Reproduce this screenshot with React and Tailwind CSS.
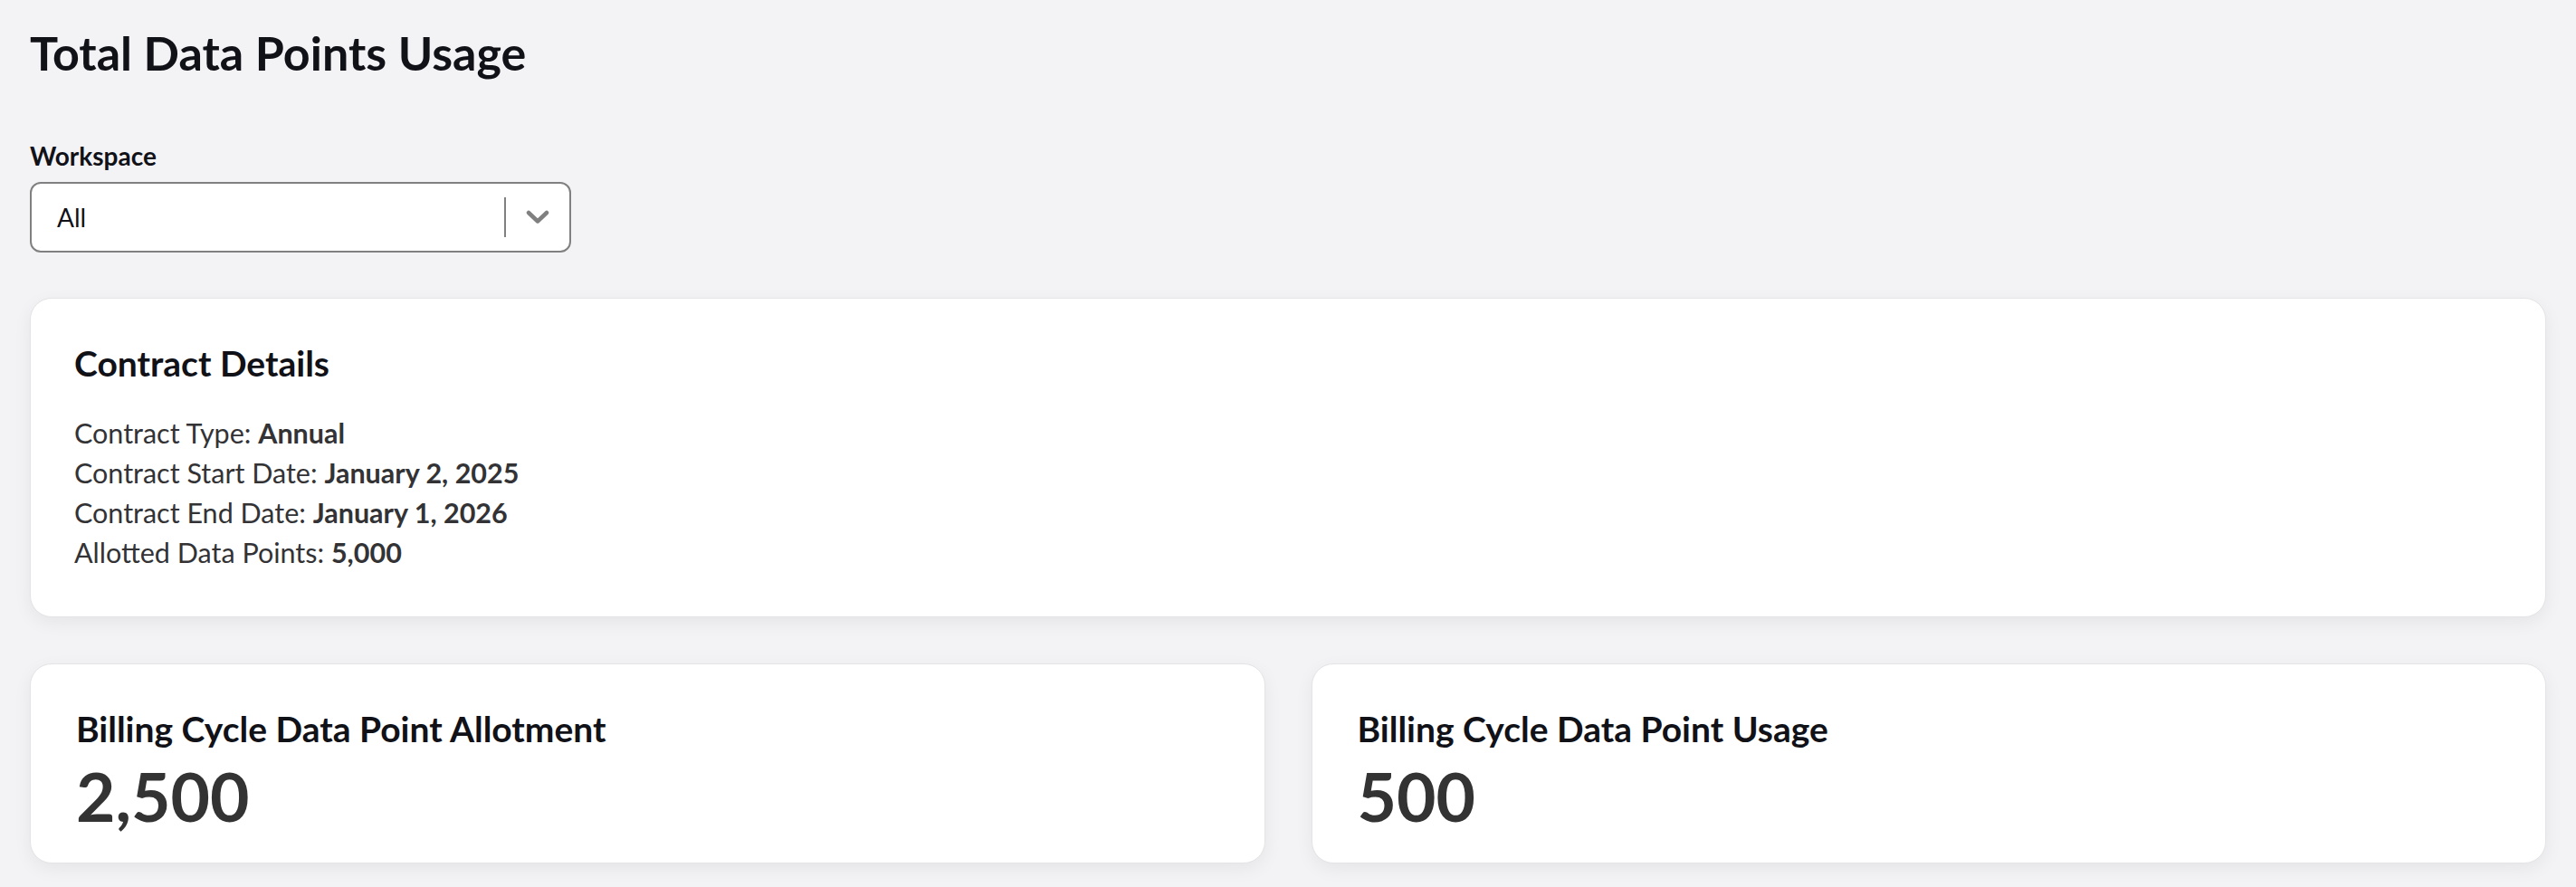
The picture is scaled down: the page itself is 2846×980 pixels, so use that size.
const details = [
  { label: "Contract Type", value: "Annual" },
  { label: "Contract Start Date", value: "January 2, 2025" },
  { label: "Contract End Date", value: "January 1, 2026" },
  { label: "Allotted Data Points", value: "5,000" },
];

const stats = [
  { title: "Billing Cycle Data Point Allotment", value: "2,500" },
  { title: "Billing Cycle Data Point Usage", value: "500" },
];

const Card = ({ className = "", children }) => (
  <div
    className={`bg-white border border-[#e4e4e7] rounded-[24px] shadow-[0_6px_20px_rgba(0,0,0,0.06)] ${className}`}
  >
    {children}
  </div>
);

const App = () => {
  return (
    <div className="min-h-screen bg-[#f3f3f5] px-[33px] pt-[27px] pb-10 font-['Lato',sans-serif]">
      <h1 className="text-[52px] leading-[1.2] font-bold text-[#111118]">Total Data Points Usage</h1>

      <div className="mt-[67px]">
        <p className="text-[28px] leading-[1.2] font-bold text-[#111118]">Workspace</p>
        <div className="mt-[11px] w-[598px] h-[78px] flex items-center bg-white border-2 border-[#808080] rounded-[12px]">
          <span className="flex-1 pl-[28px] text-[28px] text-[#111118]">All</span>
          <div className="w-[2px] h-[44px] bg-[#808080]" />
          <div className="w-[70px] flex items-center justify-center">
            <svg width="28" height="16" viewBox="0 0 28 16" fill="none">
              <path
                d="M4 3 L14 12.5 L24 3"
                stroke="#808080"
                strokeWidth="4.5"
                strokeLinecap="round"
                strokeLinejoin="round"
              />
            </svg>
          </div>
        </div>
      </div>

      <Card className="mt-[50px] px-[48px] pt-[48px] pb-[49px]">
        <h2 className="text-[39px] leading-[1.2] font-bold text-[#111118]">Contract Details</h2>
        <div className="mt-[31.5px] text-[30.5px] leading-[44px] text-[#333336]">
          {details.map((d) => (
            <p key={d.label}>
              {d.label}: <span className="font-bold">{d.value}</span>
            </p>
          ))}
        </div>
      </Card>

      <div className="mt-[51px] grid grid-cols-2 gap-[51px]">
        {stats.map((s) => (
          <Card key={s.title} className="px-[50px] pt-[47.5px] pb-[36.5px]">
            <h3 className="text-[39px] leading-[1.2] font-bold text-[#111118]">{s.title}</h3>
            <p className="mt-[13px] text-[75px] leading-none font-bold text-[#333333]">{s.value}</p>
          </Card>
        ))}
      </div>
    </div>
  );
};

export default App;
